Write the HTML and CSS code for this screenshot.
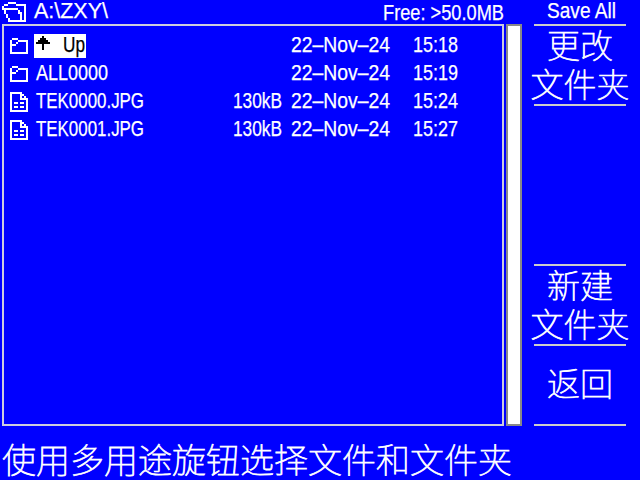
FILE: index.html
```html
<!DOCTYPE html>
<html lang="zh-CN">
<head>
<meta charset="utf-8">
<title>Save All</title>
<link rel="stylesheet" href="styles.css">
</head>
<body>
<svg class="defs" width="0" height="0">
  <symbol id="folder" viewBox="0 0 9 8"><path d="M1 .5h3M0 1.5h1M4 1.5h5M3 2.5h1M0 3.5h3M.5 1v7M8.5 1v7M0 7.5h9"/></symbol>
  <symbol id="doc" viewBox="0 0 9 10"><path d="M0 .5h6M.5 0v10M5.5 0v4M6 1.5h1M7 2.5h1M5 3.5h4M8.5 3v7M2 5.5h2M5 5.5h2M2 7.5h2M5 7.5h2M0 9.5h9"/></symbol>
</svg>
<div class="screen">
  <main class="browser">
    <header class="path">
      <svg class="open" viewBox="0 0 12 10"><path d="M3 .5h4M1 1.5h2M7 1.5h5M.5 2v2M11.5 1v9M0 3.5h8M1.5 4v2M8.5 4v2M2.5 6v2M9.5 5v5M3.5 8v2M3 9.5h9"/></svg>
      <span class="fit dir" data-w="74">A:\ZXY\</span>
      <span class="fit free" data-w="121">Free: &gt;50.0MB</span>
    </header>
    <div class="panes">
      <div class="list">
        <div class="row"><svg class="icon"><use href="#folder"/></svg><span class="name selected"><svg class="arrow" viewBox="0 0 7 7"><path d="M3.5 0v7M2 1.5h3M1 2.5h5M0 3.5h7"/></svg><span class="fit" data-w="22">Up</span></span><span></span><span class="fit" data-w="99">22–Nov–24</span><span class="fit" data-w="45">15:18</span></div>
        <div class="row"><svg class="icon"><use href="#folder"/></svg><span class="name"><span class="fit" data-w="72">ALL0000</span></span><span></span><span class="fit" data-w="99">22–Nov–24</span><span class="fit" data-w="45">15:19</span></div>
        <div class="row"><svg class="icon doc"><use href="#doc"/></svg><span class="name"><span class="fit" data-w="108">TEK0000.JPG</span></span><span class="fit" data-w="49">130kB</span><span class="fit" data-w="99">22–Nov–24</span><span class="fit" data-w="45">15:24</span></div>
        <div class="row"><svg class="icon doc"><use href="#doc"/></svg><span class="name"><span class="fit" data-w="108">TEK0001.JPG</span></span><span class="fit" data-w="49">130kB</span><span class="fit" data-w="99">22–Nov–24</span><span class="fit" data-w="45">15:27</span></div>
      </div>
      <div class="scrollbar"></div>
    </div>
  </main>
  <aside class="menu">
    <div class="title"><span class="fit" data-w="69">Save All</span></div>
    <div class="key ruled"><span>更改</span><span>文件夹</span></div>
    <div class="key"></div>
    <div class="key ruled"></div>
    <div class="key ruled"><span>新建</span><span>文件夹</span></div>
    <div class="key ruled single"><span>返回</span></div>
  </aside>
  <footer class="hint">使用多用途旋钮选择文件和文件夹</footer>
</div>
<script src="fit.js"></script>
</body>
</html>
```
FILE: styles.css
```css
* { box-sizing: border-box; }
body {
  margin: 0;
  background: #0000ff;
  color: #fff;
  font: 22.5px/24px "Liberation Sans Narrow", "Liberation Sans", sans-serif;
}
svg { display: block; fill: none; shape-rendering: crispEdges; }
svg path { stroke: currentColor; stroke-width: 1; }
.defs { display: none; }
.screen {
  width: 640px;
  height: 480px;
  overflow: hidden;
  display: grid;
  grid-template-columns: 522px 118px;
  grid-template-rows: 426px 54px;
}
.fit { display: block; white-space: pre; height: 24px; }
.fit i {
  display: inline-block;
  font-style: normal;
  transform-origin: 0 0;
  -webkit-text-stroke: .25px currentColor;
}
.browser { padding-left: 2px; }
.path { display: flex; height: 24px; }
.open { width: 24px; height: 20px; margin-top: 2px; }
.dir { margin-left: 8px; line-height: 21px; }
.free { margin-left: auto; margin-right: 18px; line-height: 25px; }
.panes { display: flex; gap: 2px; height: 402px; }
.list { width: 502px; border: 2px solid #ccccdd; padding-top: 5px; }
.row {
  display: grid;
  grid-template-columns: 24px 199px 58px 122px 60px;
  height: 28px;
  padding: 3px 0 0 6px;
  line-height: 21px;
}
.icon { width: 18px; height: 16px; margin-top: 4px; }
.icon.doc { height: 20px; margin-top: 2px; }
.name { padding-left: 2px; height: 24px; justify-self: start; }
.selected { width: 52px; display: flex; background: #fff; color: #000; }
.arrow { width: 14px; height: 14px; margin: 2px 13px 0 0; }
.scrollbar { width: 16px; background: #fff; border: 2px solid #888; }
.menu { padding: 0 14px 0 12px; }
.title {
  display: flex;
  height: 26px;
  padding-left: 13px;
  border-bottom: 2px solid #ccc;
  line-height: 22px;
}
.key, .hint {
  font-family: "Noto Sans CJK SC", sans-serif;
  font-weight: 100;
  -webkit-text-stroke: .75px #fff;
  white-space: nowrap;
}
.key {
  height: 80px;
  display: flex;
  flex-direction: column;
  align-items: center;
  justify-content: center;
  padding-bottom: 3px;
  font-size: 33px;
  line-height: 39px;
}
.single { padding-bottom: 6px; }
.ruled { border-bottom: 2px solid #ccc; }
.hint { grid-column: 1 / 3; padding-left: 2px; font-size: 34px; line-height: 66px; }
```
FILE: fit.js
```js
// Condense each label horizontally to its column width.
document.querySelectorAll('.fit').forEach(function (el) {
  var inner = document.createElement('i');
  inner.textContent = el.textContent;
  el.textContent = '';
  el.appendChild(inner);
  var w = Number(el.dataset.w);
  var natural = inner.getBoundingClientRect().width;
  el.style.width = w + 'px';
  inner.style.transform = 'scaleX(' + w / natural + ')';
});
```
